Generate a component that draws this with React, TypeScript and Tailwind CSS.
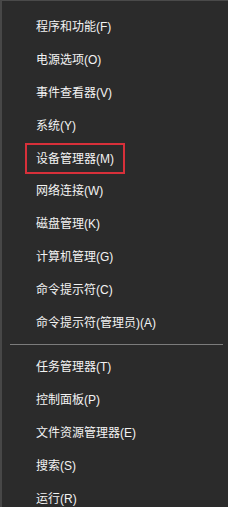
const TOP_ITEMS = [
  '程序和功能(F)',
  '电源选项(O)',
  '事件查看器(V)',
  '系统(Y)',
  '设备管理器(M)',
  '网络连接(W)',
  '磁盘管理(K)',
  '计算机管理(G)',
  '命令提示符(C)',
  '命令提示符(管理员)(A)',
];

const BOTTOM_ITEMS = ['任务管理器(T)', '控制面板(P)', '文件资源管理器(E)', '搜索(S)', '运行(R)'];

const HIGHLIGHTED = '设备管理器(M)';

function MenuItem({ label }: { label: string }) {
  const marked = label === HIGHLIGHTED;
  return (
    <div className="flex h-[32.8px] items-center">
      {marked ? (
        <span className="ml-[23px] flex h-[31px] items-center border-2 border-[#d8303a] pl-[9px] pr-[9px]">
          {label}
        </span>
      ) : (
        <span className="ml-[34px]">{label}</span>
      )}
    </div>
  );
}

export default function App() {
  return (
    <div
      className="h-[507px] w-[228px] overflow-hidden border-t border-l-2 border-t-[#4a4a4a] border-l-[#474747] bg-[#2b2b2b] pt-[10px] text-[12px] leading-none text-[#f3f3f3]"
      style={{ fontFamily: '"Liberation Sans", "Noto Sans CJK SC", sans-serif' }}
    >
      {TOP_ITEMS.map((item) => (
        <MenuItem key={item} label={item} />
      ))}

      {/* 分隔线 */}
      <div className="flex h-[12px] items-center pl-[8px] pr-[5px]">
        <div className="h-px w-full bg-[#7c7c7c]" />
      </div>

      {BOTTOM_ITEMS.map((item) => (
        <MenuItem key={item} label={item} />
      ))}
    </div>
  );
}
